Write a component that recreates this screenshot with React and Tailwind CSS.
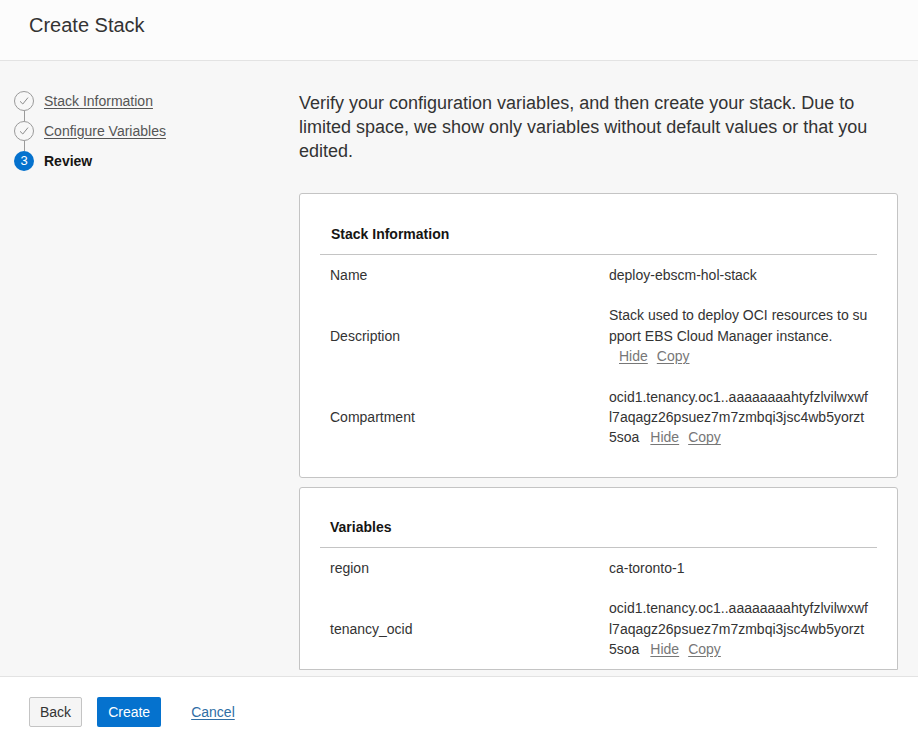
import React from "react";

const font = { fontFamily: '"Liberation Sans", Arial, sans-serif' };

function Check() {
  return (
    <div className="w-[20px] h-[20px] rounded-full border border-[#9a9a9a] flex items-center justify-center bg-[#f7f7f7]">
      <svg width="12" height="12" viewBox="0 0 12 12" fill="none">
        <path d="M2 6.3 L4.8 9 L10 2.6" stroke="#8a8a8a" strokeWidth="1" fill="none" />
      </svg>
    </div>
  );
}

function Step({ icon, label, link, last }) {
  return (
    <div className="flex">
      <div className="flex flex-col items-center w-[20px]">
        {icon}
        {!last && <div className="w-px h-[10px] bg-[#9a9a9a]" />}
      </div>
      <div className="h-[20px] flex items-center ml-[10px]">
        {link ? (
          <span className="text-[14px] text-[#555] underline underline-offset-2">{label}</span>
        ) : (
          <span className="text-[14px] font-bold text-[#161513]">{label}</span>
        )}
      </div>
    </div>
  );
}

function Act({ children }) {
  return <span className="text-[#777] underline underline-offset-2">{children}</span>;
}

function Row({ label, children }) {
  return (
    <div className="flex items-center py-[10px] text-[14px] leading-[20.4px] text-[#333]">
      <div className="w-[289px] pl-[10px] shrink-0">{label}</div>
      <div className="flex-1 whitespace-nowrap">{children}</div>
    </div>
  );
}

function Ocid() {
  return (
    <div>
      <div>ocid1.tenancy.oc1..aaaaaaaahtyfzlvilwxwf</div>
      <div>l7aqagz26psuez7m7zmbqi3jsc4wb5yorzt</div>
      <div>
        5soa<span className="ml-[11px]"><Act>Hide</Act></span>
        <span className="ml-[9px]"><Act>Copy</Act></span>
      </div>
    </div>
  );
}

export default function App() {
  return (
    <div className="w-[918px] h-[743px] flex flex-col bg-[#f7f7f7] overflow-hidden" style={font}>
      <div className="h-[61px] shrink-0 bg-[#fcfcfc] border-b border-[#e3e3e3] flex items-center pl-[29px] pb-[10px]">
        <h1 className="text-[20px] text-[#333]">Create Stack</h1>
      </div>
      <div className="flex-1 flex overflow-hidden">
        <div className="w-[299px] shrink-0 pl-[14px] pt-[30px]">
          <Step icon={<Check />} label="Stack Information" link />
          <Step icon={<Check />} label="Configure Variables" link />
          <Step
            icon={
              <div className="w-[20px] h-[20px] rounded-full bg-[#0572ce] text-white text-[13px] flex items-center justify-center">
                3
              </div>
            }
            label="Review"
            last
          />
        </div>
        <div className="flex-1 pr-[20px] pt-[30px]">
          <p className="text-[18px] leading-[24px] text-[#333]">
            Verify your configuration variables, and then create your stack. Due to
            <br />
            limited space, we show only variables without default values or that you
            <br />
            edited.
          </p>
          <div className="mt-[30px] bg-white border border-[#c4c4c4] rounded-[3px] px-[20px] pt-[20px] pb-[19px]">
            <div className="border-b border-[#c4c4c4] py-[11px] pl-[11px] text-[14px] leading-[18px] font-bold text-[#161513]">
              Stack Information
            </div>
            <Row label="Name">deploy-ebscm-hol-stack</Row>
            <Row label="Description">
              <div>Stack used to deploy OCI resources to su</div>
              <div>pport EBS Cloud Manager instance.</div>
              <div className="pl-[10px]">
                <Act>Hide</Act>
                <span className="ml-[9px]"><Act>Copy</Act></span>
              </div>
            </Row>
            <Row label="Compartment"><Ocid /></Row>
          </div>
          <div className="mt-[9px] bg-white border border-[#c4c4c4] rounded-t-[3px] px-[20px] pt-[19px] h-[183px] overflow-hidden">
            <div className="border-b border-[#c4c4c4] py-[11px] pl-[10px] text-[14px] leading-[18px] font-bold text-[#161513]">
              Variables
            </div>
            <Row label="region">ca-toronto-1</Row>
            <Row label="tenancy_ocid"><Ocid /></Row>
          </div>
        </div>
      </div>
      <div className="h-[67px] shrink-0 bg-white border-t border-[#e3e3e3] flex items-center pl-[29px] pt-[4px] gap-[15px] text-[14px]">
        <button className="h-[30px] px-[10px] bg-[#f5f5f5] border border-[#c4c4c4] rounded-[2px] text-[#333]">Back</button>
        <button className="h-[30px] px-[11px] bg-[#0572ce] rounded-[2px] text-white">Create</button>
        <span className="ml-[15px] text-[#2f6ea5] underline underline-offset-2">Cancel</span>
      </div>
    </div>
  );
}
